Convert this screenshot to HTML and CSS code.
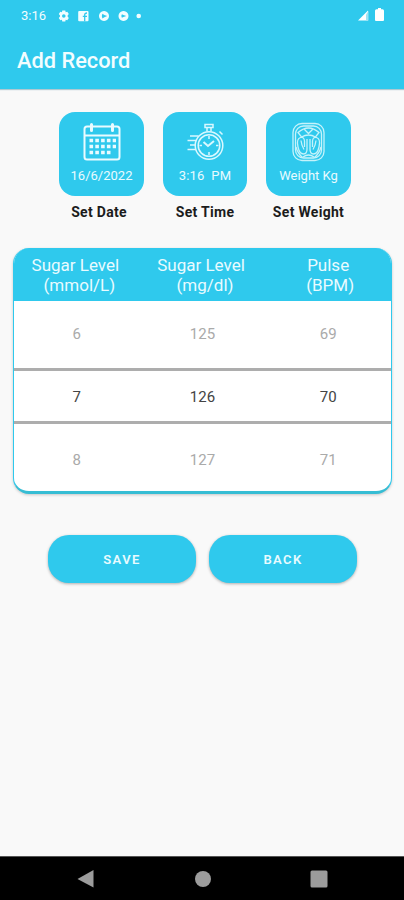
FILE: index.html
```html
<!DOCTYPE html>
<html lang="en">
<head>
    <meta charset="UTF-8">
    <meta name="viewport" content="width=device-width, initial-scale=1.0">
    <title>Add Record</title>
    <link rel="stylesheet" href="styles.css">
</head>
<body>
    <header class="app-header">
        <div class="status-bar">
            <span class="clock">3:16</span>
            <svg class="status-icons" width="86" height="12" viewBox="0 0 86 12" fill="#f2fdff">
                <!-- settings -->
                <path fill-rule="evenodd" d="M4.3 0.5h3l.4 1.7 1.6-.5 1.5 2.4L9.600 5.400v1.200l1.200 1.300-1.500 2.400-1.600-.5-.4 1.700h-3l-.4-1.700-1.600.5L.8 7.900 2 6.600V5.400L.8 4.100l1.500-2.400 1.600.5zM5.800 4.200a1.800 1.800 0 1 0 0 3.600 1.800 1.800 0 0 0 0-3.600z"/>
                <!-- social -->
                <rect x="20.200" y="1" width="10.300" height="10.300" rx="1"/>
                <path d="M26.700 11.300V4.700q0-1.700 2.300-1.700M24.800 6.400h4.200" fill="none" stroke="#2fc9ed" stroke-width="1.300"/>
                <!-- notifications -->
                <path fill-rule="evenodd" d="M46 1a5 5 0 1 0 .01 0zM44.400 3.800l2 1.200 2.800 1-2.800 1.200-2 1.200-.6-2.400z"/>
                <path fill-rule="evenodd" d="M65.500 1a5 5 0 1 0 .01 0zM63.900 4.200l1.600.9 2.800.8-2.800 1-1.600.9-.6-1.800z"/>
                <circle cx="80.700" cy="6" r="2.300"/>
            </svg>
            <svg class="signal-icons" width="28" height="15" viewBox="0 0 28 15" fill="#fff">
                <path d="M1 12.500L11 2.500v10z"/>
                <path d="M9 6.500L11.500 3v9.500H9z" fill="#9fe3f4"/>
                <path d="M21 1.200V0h3v1.200h1.500q1.500 0 1.500 1.500V12q0 1-1 1h-7q-1 0-1-1V2.700q0-1.500 1.500-1.500z"/>
            </svg>
        </div>
        <h1>Add Record</h1>
    </header>

    <main>
        <div class="tiles">
            <div class="tile-wrap">
                <div class="tile">
                    <svg width="40" height="40" viewBox="0 0 40 40" fill="none" stroke="#e9fbff" stroke-width="2">
                        <path d="M8 4.500H5q-2.500 0-2.500 2.500v28q0 2.500 2.500 2.500h30q2.500 0 2.500-2.500V7q0-2.500-2.500-2.500h-3M11 4.500h18M3 13.500h34"/>
                        <path d="M9.500 2.500v6M30.500 2.500v6" stroke-width="3" stroke-linecap="round"/>
                        <path d="M7.500 18.500h26.500M7.500 24.500h26.500M7.500 30.500h21" stroke-width="3.600" stroke-dasharray="3.600 2.200"/>
                    </svg>
                    <span>16/6/2022</span>
                </div>
                <p class="date-label">Set Date</p>
            </div>
            <div class="tile-wrap">
                <div class="tile">
                    <svg width="40" height="40" viewBox="0 0 40 40" fill="none" stroke="#d9f8ff" stroke-width="1.500">
                        <circle cx="24" cy="23.500" r="13.800"/>
                        <circle cx="24" cy="23.500" r="10.800"/>
                        <path d="M20 2.500h8v3h-8zM22 5.500v4M26 5.500v4M34.500 9.500l3 3"/>
                        <path d="M18.500 20l4.500 4 6-5" stroke-width="2"/>
                        <path d="M24 14v3M24 30v3M14.500 23.500h2.500M31 23.500h2.500"/>
                        <path d="M5 14h8.500M2.500 18.500h8.500M5 23h5.500M2.500 27.500h8.500"/>
                    </svg>
                    <span class="time">3:16 &nbsp;PM</span>
                </div>
                <p>Set Time</p>
            </div>
            <div class="tile-wrap">
                <div class="tile">
                    <svg width="40" height="40" viewBox="0 0 40 40" fill="none" stroke="#c5f3fb" stroke-width="1.300">
                        <rect x="4" y="1.500" width="31" height="37" rx="9"/>
                        <rect x="6.500" y="4" width="26" height="32" rx="8"/>
                        <!-- dial -->
                        <path d="M9 10.500q10.500-9 21 0l-3.500 4.500q-7-4-14 0zM15.500 7.500l4 4 4-4"/>
                        <!-- feet -->
                        <path d="M18 17v10q0 5-3.500 5-4 0-5.500-7-2-8 2.500-9.500Q15 14.500 15.500 19v6"/>
                        <path d="M21 17v10q0 5 3.500 5 4 0 5.500-7 2-8-2.500-9.500Q24 14.500 23.500 19v6"/>
                        <path d="M12 18.500q.5 5 3 9M27 18.500q-.5 5-3 9M7 25q1.500 6 6.500 10.500M32 25q-1.500 6-6.500 10.500M14 35q5.500-4 11 0"/>
                    </svg>
                    <span class="weight">Weight Kg</span>
                </div>
                <p>Set Weight</p>
            </div>
        </div>

        <section class="picker">
            <div class="picker-row picker-head">
                <div>Sugar Level<span class="unit">(mmol/L)</span></div>
                <div>Sugar Level<span class="unit">(mg/dl)</span></div>
                <div class="pulse">Pulse<span class="unit">(BPM)</span></div>
            </div>
            <div class="picker-row faded">
                <div>6</div>
                <div>125</div>
                <div>69</div>
            </div>
            <div class="picker-row selected">
                <div>7</div>
                <div>126</div>
                <div>70</div>
            </div>
            <div class="picker-row faded last">
                <div>8</div>
                <div>127</div>
                <div>71</div>
            </div>
        </section>

        <div class="actions">
            <button type="button">SAVE</button>
            <button type="button">BACK</button>
        </div>
    </main>

    <nav class="nav-bar">
        <svg width="18" height="20" viewBox="0 0 18 20"><path d="M.5 10L16.500 1v17.500z" fill="#9c9c9c"/></svg>
        <svg width="18" height="20" viewBox="0 0 18 20"><circle cx="9" cy="10" r="8" fill="#9c9c9c"/></svg>
        <svg width="18" height="20" viewBox="0 0 18 20"><rect x=".5" y="1.500" width="17" height="17" rx="1.500" fill="#9c9c9c"/></svg>
    </nav>
</body>
</html>
```
FILE: styles.css
```css
* {
    box-sizing: border-box;
}

body {
    margin: 0;
    height: 900px;
    display: flex;
    flex-direction: column;
    overflow: hidden;
    background: #f9f9f9;
    font-family: Roboto, "Liberation Sans", sans-serif;
}

.app-header {
    height: 89px;
    background: #2fc9ed;
    color: #f2fdff;
    box-shadow: 0 1px 1px rgba(0, 90, 120, 0.3);
}

.status-bar {
    height: 31px;
    padding: 0 19px 0 21px;
    display: flex;
    align-items: center;
}

.clock {
    width: 37px;
    font-size: 13px;
}

.signal-icons {
    margin-left: auto;
}

h1 {
    margin: 0;
    padding: 17px 17px 0;
    font-size: 21.800px;
    line-height: 26px;
    font-weight: 500;
}

main {
    flex: 1;
}

.tiles {
    display: flex;
    justify-content: center;
    gap: 19px;
    padding: 23px 0 0 6px;
}

.tile-wrap {
    width: 84.500px;
    text-align: center;
}

.tile {
    height: 84px;
    padding-top: 10px;
    display: flex;
    flex-direction: column;
    align-items: center;
    border-radius: 16px;
    background: #2fc9ed;
    color: #e9fbff;
    font-size: 13px;
    line-height: 16px;
    white-space: nowrap;
}

.tile span {
    margin-top: 6px;
}

.tile .time {
    letter-spacing: 0.2px;
}

.tile-wrap p {
    margin: 7px -10px 0;
    font-size: 14px;
    line-height: 18px;
    font-weight: 700;
    letter-spacing: 0.300px;
    color: #1c1c1c;
}

.tile-wrap .date-label {
    margin-left: -15px;
}

.picker {
    height: 246px;
    margin: 27px 12px 0 13px;
    border: 1px solid #2fc9ed;
    border-top: 0;
    border-bottom: 3px solid #36bdd4;
    border-radius: 16px;
    overflow: hidden;
    background: #fff;
    box-shadow: 0 1px 3px rgba(0, 0, 0, 0.2);
}

.picker-row {
    display: grid;
    grid-template-columns: repeat(3, 1fr);
    align-items: center;
    text-align: center;
    font-size: 15px;
}

.picker-head {
    height: 53px;
    background: #2fc9ed;
    color: #e9fbff;
    font-size: 17px;
    line-height: 20px;
}

.picker-head div {
    padding-right: 3px;
}

.picker-head .pulse {
    padding-right: 0;
}

.unit {
    display: block;
    margin-right: -8px;
}

.pulse .unit {
    margin-right: -4px;
}

.faded {
    height: 67px;
    padding-bottom: 2px;
    color: #aaa;
}

.last {
    padding: 5px 0 0;
}

.selected {
    height: 56px;
    border-top: 3px solid #adadad;
    border-bottom: 3px solid #adadad;
    color: #444;
}

.selected div {
    padding-top: 1px;
}

.actions {
    display: flex;
    justify-content: center;
    gap: 13px;
    padding: 41px 0 0 1px;
}

button {
    width: 148px;
    height: 48px;
    padding: 0;
    border: 0;
    border-radius: 21px;
    background: #2fc9ed;
    color: #e9fbff;
    font-family: inherit;
    font-size: 13px;
    font-weight: 600;
    letter-spacing: 1.400px;
    box-shadow: 0 1px 3px rgba(0, 0, 0, 0.3);
}

.nav-bar {
    height: 44px;
    display: flex;
    justify-content: space-between;
    align-items: center;
    padding: 0 76px 0 77px;
    border-top: 1px solid #555;
    background: #000;
}
```
